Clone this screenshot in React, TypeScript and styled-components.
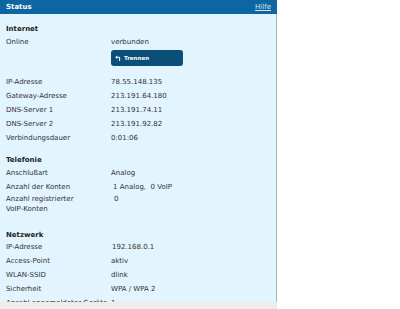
import React from 'react'
import styled, { createGlobalStyle } from 'styled-components'

const GlobalStyle = createGlobalStyle`
  html, body {
    margin: 0;
    padding: 0;
    background: #ffffff;
  }
  body {
    font-family: "DejaVu Sans", Verdana, sans-serif;
  }
`

const Page = styled.div`
  width: 277px;
  display: flex;
  flex-direction: column;
`

const Frame = styled.div`
  height: 302px;
  overflow: hidden;
  background: #e2f4fd;
  display: flex;
  flex-direction: column;
`

const Header = styled.div`
  height: 14px;
  flex-shrink: 0;
  background: #0d66a2;
  display: flex;
  align-items: center;
  justify-content: space-between;
  padding: 0 6px;
  color: #ffffff;
  font-size: 7px;
`

const HeaderTitle = styled.span`
  font-weight: bold;
`

const HelpLink = styled.a`
  color: #d4e8f5;
  text-decoration: underline;
  cursor: pointer;
`

const Body = styled.div`
  flex: 1;
  border-right: 1px solid #a4b8c2;
  padding: 9.5px 0 0 6px;
  color: #333333;
  font-size: 7px;
  line-height: 10px;
`

const Section = styled.div<{ $gap: number }>`
  margin-top: ${(p) => p.$gap}px;
`

const SectionTitle = styled.div`
  height: 11px;
  display: flex;
  align-items: center;
  font-weight: bold;
  color: #222222;
`

const Row = styled.div<{ $tall?: boolean }>`
  display: grid;
  grid-template-columns: 105px 1fr;
  min-height: 14px;
  align-items: ${(p) => (p.$tall ? 'start' : 'center')};
  padding-top: ${(p) => (p.$tall ? '0.5px' : '0')};
`

const Value = styled.span<{ $indent?: number }>`
  padding-left: ${(p) => p.$indent ?? 0}px;
  white-space: pre;
`

const ButtonRow = styled.div`
  padding: 1px 0 9px 105px;
`

const DisconnectButton = styled.button`
  width: 72px;
  height: 16px;
  border: none;
  border-radius: 3px;
  background: #0b4f78;
  color: #ffffff;
  font-family: "DejaVu Sans", Verdana, sans-serif;
  font-size: 5.5px;
  font-weight: bold;
  display: flex;
  align-items: center;
  gap: 3px;
  padding: 0 0 0 4px;
  cursor: pointer;
`

const FooterStrip = styled.div`
  height: 7px;
  background: #efedeb;
`

type Item = { label: React.ReactNode; value: string; indent?: number; tall?: boolean }

const internet: Item[] = [
  { label: 'IP-Adresse', value: '78.55.148.135' },
  { label: 'Gateway-Adresse', value: '213.191.64.180' },
  { label: 'DNS-Server 1', value: '213.191.74.11' },
  { label: 'DNS-Server 2', value: '213.191.92.82' },
  { label: 'Verbindungsdauer', value: '0:01:06' },
]

const telefonie: Item[] = [
  { label: 'Anschlußart', value: 'Analog' },
  { label: 'Anzahl der Konten', value: '1 Analog,  0 VoIP', indent: 2 },
  {
    label: (
      <>
        Anzahl registrierter
        <br />
        VoIP-Konten
      </>
    ),
    value: '0',
    indent: 3,
    tall: true,
  },
]

const netzwerk: Item[] = [
  { label: 'IP-Adresse', value: '192.168.0.1', indent: 1 },
  { label: 'Access-Point', value: 'aktiv' },
  { label: 'WLAN-SSID', value: 'dlink' },
  { label: 'Sicherheit', value: 'WPA / WPA 2' },
  { label: 'Anzahl angemeldeter Geräte', value: '1' },
]

const Rows = ({ items }: { items: Item[] }) => (
  <>
    {items.map((it, i) => (
      <Row key={i} $tall={it.tall}>
        <span>{it.label}</span>
        <Value $indent={it.indent}>{it.value}</Value>
      </Row>
    ))}
  </>
)

// small "return" arrow used on the disconnect button
const ReturnIcon = () => (
  <svg width="6" height="6" viewBox="0 0 6 6" fill="none">
    <path d="M4.6 6V2.3H1.8" stroke="#fff" strokeWidth="1" />
    <path d="M0.2 2.3L2.2 0.6V4Z" fill="#fff" />
  </svg>
)

export default function App() {
  return (
    <>
      <GlobalStyle />
      <Page>
        <Frame>
          <Header>
            <HeaderTitle>Status</HeaderTitle>
            <HelpLink>Hilfe</HelpLink>
          </Header>
          <Body>
            <Section $gap={0}>
              <SectionTitle>Internet</SectionTitle>
              <Row>
                <span>Online</span>
                <Value>verbunden</Value>
              </Row>
              <ButtonRow>
                <DisconnectButton>
                  <ReturnIcon />
                  Trennen
                </DisconnectButton>
              </ButtonRow>
              <Rows items={internet} />
            </Section>
            <Section $gap={10}>
              <SectionTitle>Telefonie</SectionTitle>
              <Rows items={telefonie} />
            </Section>
            <Section $gap={15}>
              <SectionTitle>Netzwerk</SectionTitle>
              <Rows items={netzwerk} />
            </Section>
          </Body>
        </Frame>
        <FooterStrip />
      </Page>
    </>
  )
}
